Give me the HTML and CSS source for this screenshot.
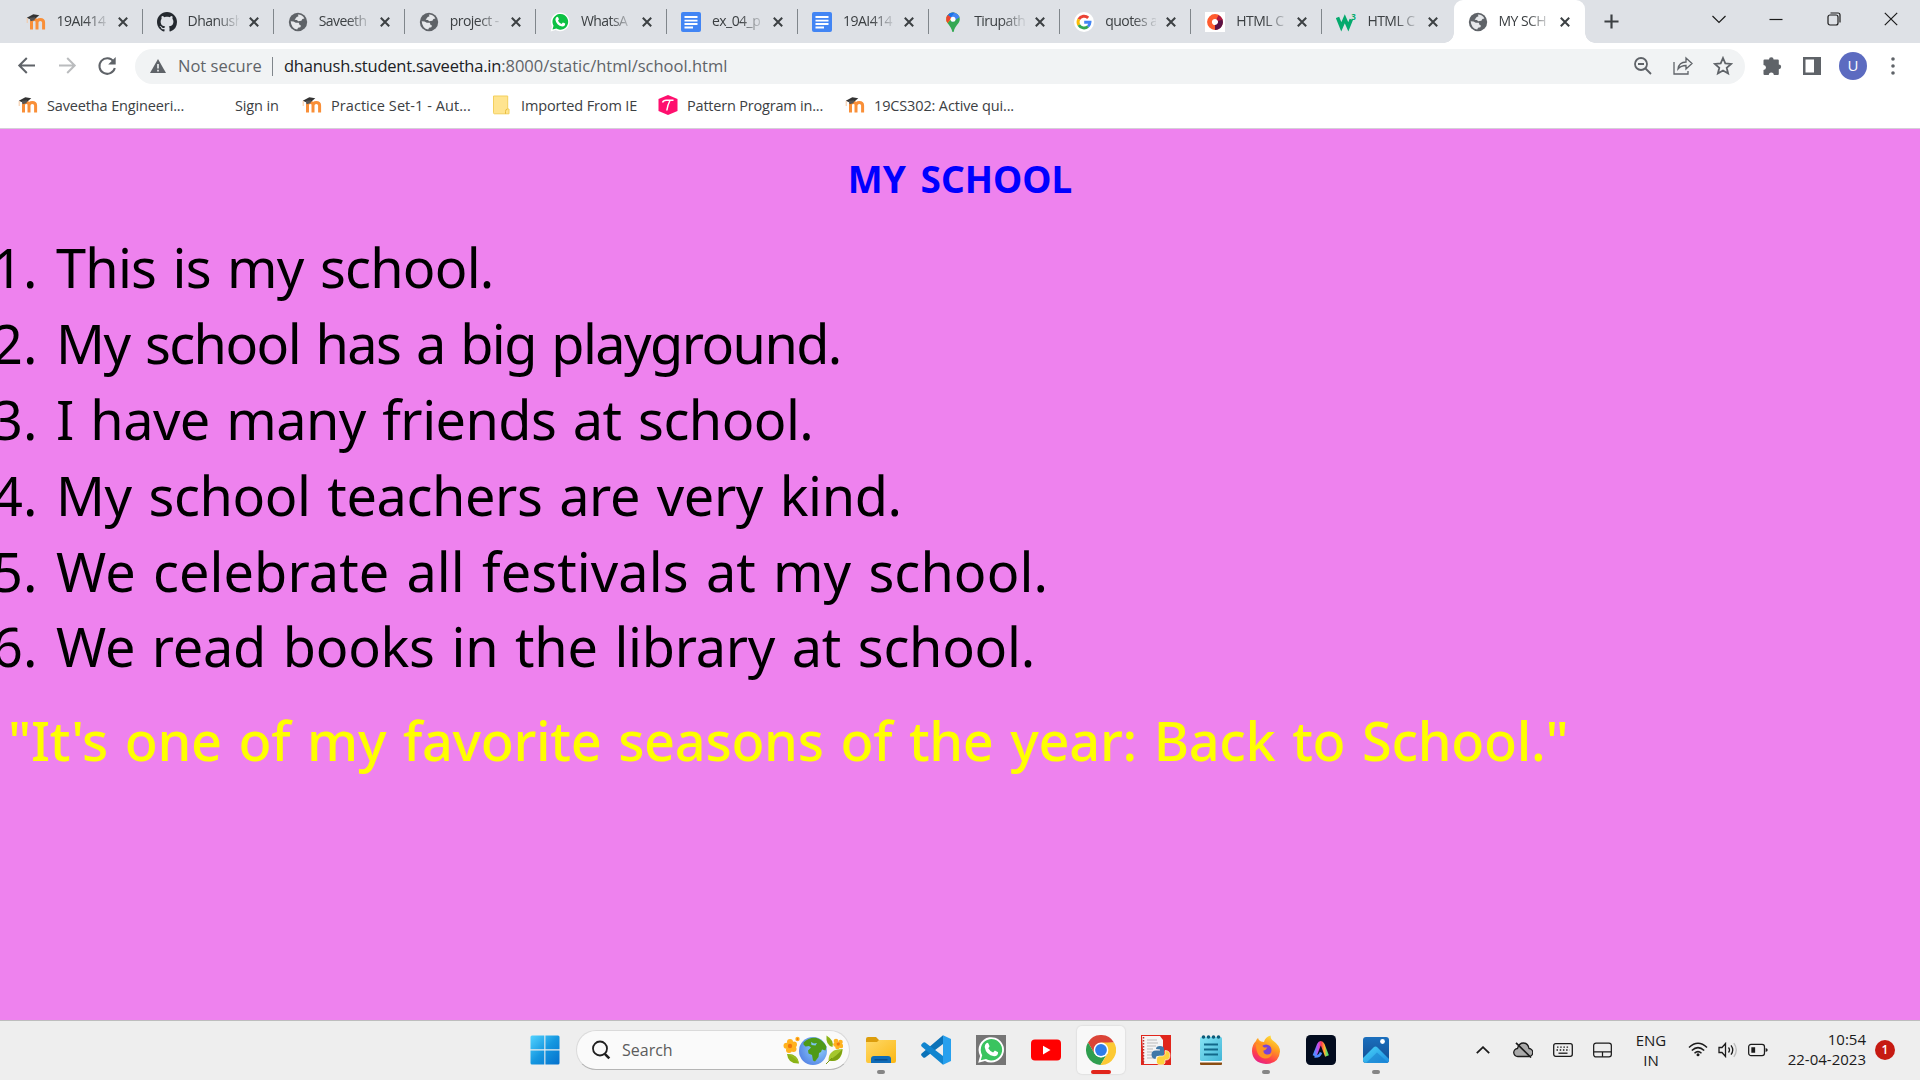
FILE: index.html
```html
<!DOCTYPE html>
<html lang="en">
<head>
<meta charset="utf-8">
<title>MY SCHOOL</title>
<link rel="stylesheet" href="styles.css">
</head>
<body>
<svg class="sprite" aria-hidden="true">
  <defs>
    <linearGradient id="win" x1="0" y1="0" x2="1" y2="1"><stop offset="0" stop-color="#52d3ff"/><stop offset=".5" stop-color="#1597e0"/><stop offset="1" stop-color="#0470cc"/></linearGradient>
    <linearGradient id="fold" x1="0" y1="0" x2="1" y2="1"><stop offset="0" stop-color="#ffd968"/><stop offset="1" stop-color="#fbb713"/></linearGradient>
    <linearGradient id="note" x1="0" y1="0" x2="1" y2="1"><stop offset="0" stop-color="#86e4f5"/><stop offset="1" stop-color="#41b5d6"/></linearGradient>
    <linearGradient id="photo" x1="0" y1="0" x2="0" y2="1"><stop offset="0" stop-color="#1b6fbd"/><stop offset="1" stop-color="#124e92"/></linearGradient>
    <linearGradient id="hill" x1="0" y1="0" x2="1" y2="1"><stop offset="0" stop-color="#4ad4f8"/><stop offset="1" stop-color="#1c8de0"/></linearGradient>
    <linearGradient id="fox" x1=".8" y1="0" x2=".3" y2="1"><stop offset="0" stop-color="#ffe93d"/><stop offset=".4" stop-color="#ff9a1f"/><stop offset=".75" stop-color="#ff3f4b"/><stop offset="1" stop-color="#e5208a"/></linearGradient>
    <linearGradient id="arc" x1="0" y1="1" x2="1" y2="1"><stop offset="0" stop-color="#4f8cff"/><stop offset=".3" stop-color="#c44df0"/><stop offset=".55" stop-color="#ff3b4e"/><stop offset=".8" stop-color="#ffb02e"/><stop offset="1" stop-color="#5be06a"/></linearGradient>
    <radialGradient id="sea" cx=".65" cy=".4" r=".7"><stop offset="0" stop-color="#92d4fb"/><stop offset="1" stop-color="#5583e6"/></radialGradient>
  </defs>
  <symbol id="x" viewBox="0 0 10 10"><path d="M.8.8 9.2 9.2M9.2.8.8 9.2" fill="none" stroke="#3c4043" stroke-width="2"/></symbol>
  <symbol id="globe" viewBox="0 0 20 20"><circle cx="10" cy="10" r="9.200" fill="#5f6368"/><path d="M2.700 9.200 5.500 9.500l2.300 1.300h3l.8 2.200 1.400.6-.6 1.700-2.300.5-.9 1.800Q3.200 16.400 2.700 9.200ZM9.800 2.600q4.700.2 6.600 4l-2 .3-1 1.800-3.200.5-1.300-1.200-2.300-.3L8.700 5l1.800-.8Z" fill="#e6e8eb"/><path d="m13 10.500 4.200-1.200q0 3-1.500 4.700l-1.500-1.700Z" fill="#5f6368"/></symbol>
  <symbol id="moodle" viewBox="0 0 20 20"><path d="M5.500 17.500V10q0-2.600 2.800-2.600T11 10v7.500M11 10.500q0-3.100 3.300-3.100t3.300 3.100v7" fill="none" stroke="#f98f38" stroke-width="3"/><path d="m.8 5.800 6.500-3.500 6 1-4.200 3.500-5 .5Z" fill="#333"/><path d="m3.600 5.800 5.600-.6-.7 3-4 1Z" fill="#555"/><path d="M1.200 6v5" stroke="#f5c7a0" stroke-width="1"/></symbol>
  <symbol id="docs" viewBox="0 0 20 20"><rect width="20" height="20" rx="2" fill="#4285f4"/><path d="M3.500 5h13M3.500 8.600h13M3.500 12h13M3.500 15.500h8.500" stroke="#fff" stroke-width="1.900"/></symbol>
  <symbol id="wa" viewBox="0 0 30 30"><path d="m2.200 27.800 1.900-6.900A12.700 12.700 0 1 1 9 25.900Z" fill="#fff"/><path d="m4.800 25.200 1.400-5A10.700 10.700 0 1 1 10 24Z" fill="var(--g,#3ac45f)"/><path d="M10.400 8.200q1-1 2 .3l1.200 2.700-1.300 2q1.700 3.100 4.800 4.400l1.800-2 3.200 1.600q0 4-4 4Q10 20 8.700 12q0-2.500 1.700-3.800Z" fill="#fff"/></symbol>
</svg>

<header class="tabs">
  <div class="tab"><svg class="fav"><use href="#moodle"/></svg><span class="name">19AI414</span><svg class="close"><use href="#x"/></svg></div>
  <div class="tab"><svg class="fav" viewBox="0 0 16 16"><path fill="#24292f" d="M8 0C3.580 0 0 3.580 0 8c0 3.540 2.290 6.530 5.470 7.590.4.07.55-.17.55-.38 0-.19-.01-.82-.01-1.490-2.010.37-2.530-.49-2.690-.94-.09-.23-.48-.94-.82-1.130-.28-.15-.68-.52-.01-.53.63-.01 1.080.58 1.230.82.72 1.210 1.870.87 2.330.66.07-.52.28-.87.51-1.070-1.780-.2-3.640-.89-3.640-3.950 0-.87.31-1.590.82-2.150-.08-.2-.36-1.020.08-2.120 0 0 .67-.21 2.200.82.640-.18 1.320-.27 2-.27s1.360.09 2 .27c1.530-1.040 2.200-.82 2.200-.82.440 1.100.160 1.920.080 2.120.510.560.820 1.270.820 2.150 0 3.070-1.870 3.750-3.650 3.950.290.250.540.730.540 1.480 0 1.070-.01 1.930-.01 2.200 0 .21.150.46.550.38A8.010 8.010 0 0 0 16 8c0-4.420-3.580-8-8-8Z"/></svg><span class="name">Dhanush</span><svg class="close"><use href="#x"/></svg></div>
  <div class="tab"><svg class="fav"><use href="#globe"/></svg><span class="name">Saveeth</span><svg class="close"><use href="#x"/></svg></div>
  <div class="tab"><svg class="fav"><use href="#globe"/></svg><span class="name">project -</span><svg class="close"><use href="#x"/></svg></div>
  <div class="tab"><svg class="fav green"><use href="#wa"/></svg><span class="name">WhatsA</span><svg class="close"><use href="#x"/></svg></div>
  <div class="tab"><svg class="fav"><use href="#docs"/></svg><span class="name">ex_04_p</span><svg class="close"><use href="#x"/></svg></div>
  <div class="tab"><svg class="fav"><use href="#docs"/></svg><span class="name">19AI414</span><svg class="close"><use href="#x"/></svg></div>
  <div class="tab"><svg class="fav" viewBox="0 0 20 20"><defs><clipPath id="pin"><path d="M10 .5a6.800 6.800 0 0 1 6.800 6.800c0 4.500-5 6.200-6 12.200q-.8 1-1.600 0c-1-6-6-7.700-6-12.200A6.800 6.800 0 0 1 10 .5Z"/></clipPath></defs><g clip-path="url(#pin)"><path fill="#34a853" d="M0 0h20v20H0z"/><path fill="#fbbc04" d="M0 16 15 0H0z"/><path fill="#4285f4" d="M5 0h15v3L9 10Z"/><path fill="#1a73e8" d="M2 0h10L8 5 4 4Z"/><path fill="#ea4335" d="m4.500 2.500 4 3.500-4 5-2-1V4Z"/></g><circle cx="10" cy="7.300" r="2.500" fill="#fff"/></svg><span class="name">Tirupath</span><svg class="close"><use href="#x"/></svg></div>
  <div class="tab"><svg class="fav" viewBox="0 0 20 20"><circle cx="10" cy="10" r="10" fill="#fff"/><g fill="none" stroke-width="2.900"><path stroke="#ea4335" d="M4.800 7.200A6 6 0 0 1 14.200 5.900"/><path stroke="#fbbc05" d="M4.800 7.200a6 6 0 0 0 0 5.800"/><path stroke="#34a853" d="M4.800 13a6 6 0 0 0 9.200 1.500"/><path stroke="#4285f4" d="M14 14.500a6 6 0 0 0 2-4.200H10.200"/></g></svg><span class="name">quotes a</span><svg class="close"><use href="#x"/></svg></div>
  <div class="tab"><svg class="fav" viewBox="0 0 20 20"><path fill="#fff" d="M0 0h20v20H0z"/><g fill="none" stroke-width="4.800"><circle cx="10" cy="10" r="5.500" stroke="#ff5b2e"/><path stroke="#5a1247" d="M14.900 7.500A5.500 5.500 0 0 1 10 15.500"/><path stroke="#ad1740" d="M12.500 5.100a5.500 5.500 0 0 1 2.800 3.300"/></g></svg><span class="name">HTML C</span><svg class="close"><use href="#x"/></svg></div>
  <div class="tab"><svg class="fav" viewBox="0 0 20 20"><path fill="none" stroke="#04aa6d" stroke-width="3.600" d="m1.500 5.500 3.800 9.300 3.500-8 3.500 8 3-7.500"/><text x="15.300" y="8.200" class="w3">3</text></svg><span class="name">HTML C</span><svg class="close"><use href="#x"/></svg></div>
  <div class="tab active"><svg class="fav"><use href="#globe"/></svg><span class="name">MY SCH</span><svg class="close"><use href="#x"/></svg></div>
  <svg class="plus" viewBox="0 0 16 16"><path d="M8 .5v15M.5 8h15" stroke="#3c4043" stroke-width="2.300"/></svg>
  <div class="winbtns">
    <svg viewBox="0 0 14 14"><path d="m.5 4 6.500 6.500L13.500 4"/></svg>
    <svg viewBox="0 0 14 14"><path d="M.5 7.500h13"/></svg>
    <svg viewBox="0 0 14 14"><rect x="1" y="3" width="10" height="10" rx="2"/><path d="M3.500 1H11q2 0 2 2v7.500"/></svg>
    <svg viewBox="0 0 14 14"><path d="m.8.8 12.400 12.400M13.200.8.8 13.200"/></svg>
  </div>
</header>

<nav class="toolbar">
  <svg class="nav" viewBox="0 0 20 20"><path d="M18 9.500H3M9.800 2 2.300 9.500l7.500 7.500"/></svg>
  <svg class="nav dim" viewBox="0 0 20 20"><path d="M2 9.500h15M10.200 2l7.500 7.500-7.500 7.500"/></svg>
  <svg class="nav" viewBox="0 0 20 20"><path d="M16.600 5.500A7.800 7.800 0 1 0 17.800 12"/><path class="solid" d="M18.700 1v7.500h-7.500Z"/></svg>
  <div class="omnibox">
    <svg class="warn" viewBox="0 0 16 14"><path d="M8 0 16 14H0Z" fill="#5f6368"/><path d="M8 5v4.500M8 10.700v1.700" stroke="#f1f3f4" stroke-width="1.600"/></svg>
    <span class="insecure">Not secure</span><i class="bar"></i>
    <span class="url"><b>dhanush.student.saveetha.in</b>:8000/static/html/school.html</span>
    <svg class="act" viewBox="0 0 20 20"><circle cx="8" cy="8" r="6"/><path d="m12.500 12.500 5.500 5.500M5 8h6"/></svg>
    <svg class="act thin" viewBox="0 0 20 20"><path d="M1 6v12h14v-3M5 13q1-7 8-7V2l6 5.500-6 5.500V9.500Q8 9.500 5 13Z"/></svg>
    <svg class="act" viewBox="0 0 20 20"><path d="m10 2 2.300 5.400 5.900.5-4.500 3.900 1.400 5.700-5.100-3-5.100 3 1.400-5.700L1.800 7.900l5.900-.5Z"/></svg>
  </div>
  <svg class="ext" viewBox="0 0 20 20"><path fill="#5f6368" d="M7 3.500a2.300 2.300 0 0 1 4.600 0h4.200q1 0 1 1v4a2.300 2.300 0 0 1 0 4.700V18q0 1-1 1h-4a2.500 2.500 0 0 0-5 0H2.500q-1 0-1-1v-4a2.500 2.500 0 0 0 0-5V4.500q0-1 1-1Z"/></svg>
  <svg class="ext" viewBox="0 0 20 20"><path fill="#5f6368" fill-rule="evenodd" d="M1 1h18v18H1Zm2.500 2.500v13H12v-13Z"/></svg>
  <span class="avatar">U</span>
  <svg class="dots" viewBox="0 0 4 18"><path d="M2 2v0M2 9v0M2 16v0"/></svg>
</nav>

<nav class="bookmarks">
  <span class="bm b1"><svg class="fav"><use href="#moodle"/></svg>Saveetha Engineeri...</span>
  <span class="bm b2">Sign in</span>
  <span class="bm b3"><svg class="fav"><use href="#moodle"/></svg>Practice Set-1 - Aut...</span>
  <span class="bm b4"><svg class="fav" viewBox="0 0 20 20"><path d="M2.500 1h14.200v13H18v4.800H3.500q-1 0-1-1Z" fill="#ffe48f" stroke="#f3cf5d" stroke-width="1"/><path d="M16.500 14q-2 0-2 2.500v2.300" fill="none" stroke="#e9bd3b"/></svg>Imported From IE</span>
  <span class="bm b5"><svg class="fav" viewBox="0 0 20 20"><path d="m10 0 9.500 4v12L10 20 .5 16V4Z" fill="#ff0f6e"/><path d="M4.500 7.500Q5.500 5 8.500 5.200h7M12 5.500Q9.500 10 8.800 15.500" fill="none" stroke="#fff" stroke-width="1.500"/></svg>Pattern Program in...</span>
  <span class="bm b6"><svg class="fav"><use href="#moodle"/></svg>19CS302: Active qui...</span>
</nav>

<main class="page">
  <h1>MY SCHOOL</h1>
  <ul class="facts">
    <li><span class="num">1.</span><span class="l1">This is my school.</span></li>
    <li><span class="num">2.</span><span class="l2">My school has a big playground.</span></li>
    <li><span class="num">3.</span><span class="l3">I have many friends at school.</span></li>
    <li><span class="num">4.</span><span class="l4">My school teachers are very kind.</span></li>
    <li><span class="num">5.</span><span class="l5">We celebrate all festivals at my school.</span></li>
    <li><span class="num">6.</span><span class="l6">We read books in the library at school.</span></li>
  </ul>
  <p class="quote">"It's one of my favorite seasons of the year: Back to School."</p>
</main>

<footer class="taskbar">
  <div class="apps">
    <svg class="start" viewBox="0 0 30 30"><path fill="url(#win)" d="M2 .5h12.300v13.800H.5V2Q.5.500 2 .5ZM15.400.5H28q1.500 0 1.500 1.500v12.300H15.400ZM.5 15.400h13.800v14.100H2q-1.500 0-1.500-1.500ZM15.400 15.400h14.100V28q0 1.500-1.500 1.500H15.400Z"/></svg>
    <div class="search">
      <svg class="lens" viewBox="0 0 20 20"><circle cx="9" cy="8.500" r="7"/><path d="m13.800 13.800 4.500 4.500" stroke-width="2.600"/></svg>
      <span>Search</span>
      <svg class="art" viewBox="0 0 60 30">
        <g fill="#ffb21e"><circle cx="7" cy="7" r="3"/><circle cx="11" cy="9.500" r="3"/><circle cx="10.500" cy="14" r="3"/><circle cx="6" cy="15" r="3"/><circle cx="3.500" cy="10.800" r="3"/><circle cx="14.500" cy="4" r="2.200"/><circle cx="53" cy="6" r="2.300"/><circle cx="57.500" cy="7" r="2.300"/><circle cx="58" cy="11" r="2.300"/><circle cx="54.500" cy="12" r="2.300"/><circle cx="52.500" cy="9.500" r="2.300"/></g>
        <circle cx="7" cy="11" r="2.200" fill="#f0770b"/><circle cx="55.300" cy="9" r="1.700" fill="#f0770b"/><circle cx="14.500" cy="4" r=".9" fill="#f0770b"/>
        <path fill="#8ab316" d="M4 19q11-.5 12 9.500Q5 29 4 19Z"/><path fill="#9cbf24" d="M4 19q8 3 12 9.500-2-9-12-9.500Z"/>
        <path fill="#8ab316" d="M43.500.5q8 5 6 11.500-7-2-6-11.500Z"/><path fill="#a5c72e" d="M59.500 14q-14 0-14 11.500Q59 28 59.500 14Z"/><path fill="#7da112" d="M59.500 14Q58 28 45.500 25.500 54 21 59.500 14Z"/><path d="m43 29 6-6" stroke="#78970f"/>
        <circle cx="30" cy="16" r="14" fill="url(#sea)"/><path fill="#4f9a18" d="M20.500 7.500Q26 2 33 2.800q7 2 10.500 9l-1 3.700-3.500-1-1 2.500-2 1-.5 4-3.500 4.500-2-1-1-5.500-3.500-1.500-.5-3 3-3-2-1.500-3.500.5-2-2Z"/><path fill="#7cc4ef" d="m28 7 3 1.500 3-.5-1.500 2.500-4-.5Z"/>
      </svg>
    </div>
    <span class="app folder"><svg viewBox="0 0 30 30"><path fill="#dc9d0c" d="M0 4q0-2 2-2h8l3 3h17v8H0Z"/><path fill="url(#fold)" d="M0 7h11l2-2h17v21q0 2-2 2H2q-2 0-2-2Z"/><path fill="#0f6cb8" d="M5 28v-4q0-3 3-3h14q3 0 3 3v4Z"/><path d="M8.500 24.800h13" stroke="#0a4a86" stroke-width="1.300"/></svg><i></i></span>
    <span class="app"><svg viewBox="0 0 30 30"><path fill="#0b72b8" d="M.6 18.600 22 .2l2 7.300L4.200 22.500Q3 23.200 2 22.200L.6 20.800q-1-1.100 0-2.200Z"/><path fill="#1185cf" d="M.6 11.400 22 29.800l2-7.300L4.200 7.500Q3 6.800 2 7.800L.6 9.200q-1 1.100 0 2.200Z"/><path fill="#27a0ee" d="M22 .2 30 4v22l-8 3.800Z"/></svg></span>
    <span class="app"><svg viewBox="0 0 30 30"><path fill="#757575" d="M0 0h30v30H0z"/><use href="#wa"/></svg></span>
    <span class="app"><svg viewBox="0 0 30 30"><rect y="4.500" width="30" height="21" rx="4" fill="#f00"/><path d="m12 10.800 7.500 4.300-7.500 4.300Z" fill="#fff"/></svg></span>
    <span class="app open"><svg viewBox="0 0 30 30"><path fill="#db4437" d="M2 7.500A15 15 0 0 1 28 7.500L15 8.500 8.500 18.500Z"/><path fill="#2f9e4f" d="M2 7.500 8.800 19 15 22.500l6.200-3.700L14.500 30A15 15 0 0 1 2 7.500Z"/><path fill="#fcc934" d="M28 7.500A15 15 0 0 1 14.500 30l7-11.500-.5-7.500-6-3.500Z"/><circle cx="15" cy="15" r="7.400" fill="#fff"/><circle cx="15" cy="15" r="5.900" fill="#2f7de9"/></svg><i></i></span>
    <span class="app"><svg viewBox="0 0 30 30"><path fill="#e1251b" d="M0 0h30v30H0z"/><path fill="#f4f4f4" d="M1 1h18l3 4v24H3Z"/><path d="M2.500 2v27" stroke="#b33" stroke-width="1.500" stroke-dasharray="1.500 1.500"/><path d="M6 5h10M6 8h11M6 11h9M6 14h6M6 17h5M6 20h5M6 23h8" stroke="#bbb"/><path fill="#3f78a8" d="M15 14q0-3 4-3t4 3v5q0 2-3 2h-4q-1 0-1.500 3-4-.5-4-4.500t4.500-4H19v-1Z"/><path fill="#fdd23c" stroke="#fff" stroke-width=".6" d="M24 15.500q5 0 5 5t-5 4.500v3q-1 2-4 2t-4.500-2v-4q0-3 3-3h3q2 0 2.500-2Z"/></svg></span>
    <span class="app"><svg viewBox="0 0 30 30"><rect x="4" y="25" width="22" height="5" rx="1" fill="#8a4d12"/><path fill="#fff" d="M4 24h22v3.500H4z"/><rect x="4" y="2" width="22" height="24" rx="1.500" fill="url(#note)"/><path d="M8 9.500h14M8 14.500h14M8 19.500h14" stroke="#12688a" stroke-width="1.900"/><path d="M7.500 2v0M12.500 2v0M17.500 2v0M22.500 2v0" stroke="#0d5b79" stroke-width="3.600" stroke-linecap="round"/></svg></span>
    <span class="app"><svg viewBox="0 0 30 30"><path fill="url(#fox)" d="M5 6q.5-2 2-3 .5 2.500 3 3.500l3 .5q1-5 6.500-6.500 0 3.500 3 5.500Q29 10.500 29 16.500q-1 12-14 12.500Q1.500 28 1 16 1 9.500 5 6Z"/><circle cx="15" cy="15" r="5.500" fill="#7a42d8"/><path fill="#ff9322" d="M5 9q5 0 8 3.500h3.500Q15 15 12.500 15.500q-.5 3 3 4 4 .5 6-2.500-1 7-8 6.500Q5 22 5 9Z"/></svg><i></i></span>
    <span class="app"><svg viewBox="0 0 30 30"><rect width="30" height="30" rx="4.500" fill="#020b1e"/><path d="M8.500 21 12.800 10q2-3.800 4 0L21 21" fill="none" stroke="url(#arc)" stroke-width="4"/><path d="M8.500 21.500q5 .5 6.500-4" fill="none" stroke="#4f8cff" stroke-width="2.500"/></svg></span>
    <span class="app"><svg viewBox="0 0 30 30"><rect x="2" y="2" width="26" height="26" rx="3" fill="url(#photo)"/><path fill="url(#hill)" d="M2 23 12.500 12.500q2-2 4 0L28 24v1q0 3-3 3H5q-3 0-3-3Z"/><path fill="#1577c8" d="m5 28 11-10.500 11 10Z" opacity=".5"/><circle cx="21.500" cy="6.500" r="2.400" fill="#fff"/></svg><i></i></span>
  </div>
  <div class="tray">
    <svg class="t-up" viewBox="0 0 14 8"><path d="m.8 7.200 6.200-6 6.200 6" stroke-width="1.800"/></svg>
    <svg class="t-cloud" viewBox="0 0 20 16"><path d="M5 14.500a4 4 0 0 1-.5-8Q6 1 10.500 1t5.500 5.500a4 4 0 0 1-.5 8Z" fill="#aaa"/><path d="M3 .8 18 15.500" stroke-width="1.700"/></svg>
    <svg class="t-key" viewBox="0 0 20 14"><rect x=".7" y=".7" width="18.600" height="12.600" rx="2"/><path d="M4 4.200h12M3.500 7h13" stroke-dasharray="1.500 1.700"/><path d="M5.500 10.200h9"/></svg>
    <svg class="t-pad" viewBox="0 0 20 16"><rect x=".7" y=".7" width="18.600" height="14.600" rx="2.500"/><path d="M1 10h18M10 10v5"/></svg>
    <div class="lang"><span>ENG</span><span>IN</span></div>
    <svg class="t-wifi" viewBox="0 0 20 15"><path d="M1 5.500q9-8.500 18 0M3.800 8.500q6.200-5.800 12.400 0M6.500 11.200q3.500-3.200 7 0" stroke-width="1.500"/><circle cx="10" cy="12.800" r="1.500" fill="#1b1b1b" stroke="none"/></svg>
    <svg class="t-vol" viewBox="0 0 20 16"><path d="M1 5.500h3l3.500-4v13l-3.500-4H1ZM10.500 5.500q2 2.500 0 5M13 3.300q3.500 4.700 0 9.400"/><path d="M15.800 1.200q5 6.800 0 13.600" stroke="#bbb"/></svg>
    <svg class="t-bat" viewBox="0 0 21 14"><rect x=".7" y="1.200" width="16.600" height="11.600" rx="2.500"/><path d="M3.500 4h4v6h-4zM18.500 5v4l2-1V6Z" fill="#1b1b1b" stroke="none"/></svg>
    <div class="clock"><span>10:54</span><span>22-04-2023</span></div>
    <span class="badge">1</span>
  </div>
</footer>
</body>
</html>
```
FILE: styles.css
```css
* { box-sizing: border-box; }
body {
  margin: 0;
  width: 1920px;
  height: 1080px;
  overflow: hidden;
  display: flex;
  flex-direction: column;
  background: #fff;
  font-family: "Open Sans", "Noto Sans", sans-serif;
  color: #3c4043;
}
svg { display: block; flex: none; }
.sprite { position: absolute; width: 0; height: 0; }
.fav { width: 20px; height: 20px; }
.green { --g: #0cc143; width: 22px; height: 22px; margin: 0 -1px; }

/* Tab strip */
.tabs { display: flex; height: 43px; padding-left: 11.500px; background: #dee1e6; }
.tab {
  position: relative;
  width: 131.1px;
  display: flex;
  align-items: center;
  padding: 0 14px;
  flex: none;
}
.tab::after { content: ""; position: absolute; right: 0; top: 9px; width: 1px; height: 25px; background: #80868b; }
.name {
  width: 51px;
  margin: 0 10px 0 11px;
  white-space: nowrap;
  font-size: 14px;
  letter-spacing: -.55px;
  line-height: 38px;
  padding-bottom: 2px;
  -webkit-mask-image: linear-gradient(90deg, #000 55%, transparent 105%);
  mask-image: linear-gradient(90deg, #000 55%, transparent 105%);
}
.close { width: 10px; height: 10px; }
.active { background: #fff; border-radius: 9px 9px 0 0; z-index: 1; }
.active::before, .active::after {
  content: "";
  display: block;
  position: absolute;
  top: auto;
  bottom: 0;
  width: 10px;
  height: 10px;
}
.active::before { left: -10px; background: radial-gradient(circle at 0 0, #dee1e6 9.500px, #fff 10px); }
.active::after { right: -10px; background: radial-gradient(circle at 100% 0, #dee1e6 9.500px, #fff 10px); }
.tab:nth-child(11)::after { display: none; }
.w3 { font: 700 8px "Open Sans", sans-serif; fill: #04aa6d; }
.plus { width: 15px; height: 15px; margin: 13.500px 0 0 19px; }
.winbtns { display: flex; gap: 43.500px; margin: 12px 22px 0 auto; }
.winbtns svg { width: 14px; height: 14px; fill: none; stroke: #1b1b1b; stroke-width: 1.200; }

/* Toolbar */
.toolbar { display: flex; align-items: center; height: 45px; padding: 1px 22px 0 17px; }
.nav { width: 20px; height: 20px; margin-right: 20px; fill: none; stroke: #5f6368; stroke-width: 2; }
.dim { stroke: #babcbe; }
.solid { fill: #5f6368; stroke: none; }
.omnibox {
  flex: none;
  display: flex;
  align-items: center;
  width: 1610px;
  height: 35px;
  margin-left: -2px;
  padding: 0 12px 0 15px;
  border-radius: 18px;
  background: #f1f3f4;
  color: #5f6368;
  font-size: 16.500px;
}
.warn { width: 16px; height: 14px; }
.insecure { margin-left: 12px; width: 94px; padding-bottom: 2px; }
.bar { width: 1px; height: 19px; background: #80868b; margin-right: 11px; }
.url { margin-right: auto; padding-bottom: 2px; }
.url b { font-weight: 400; color: #202124; letter-spacing: -.22px; }
.act { width: 20px; height: 20px; margin-left: 20px; fill: none; stroke: #5f6368; stroke-width: 1.800; }
.thin { stroke-width: 1.300; }
.ext { width: 20px; height: 20px; margin-left: 20px; }
.omnibox + .ext { margin-left: 17px; }
.avatar {
  width: 28px;
  height: 28px;
  margin: 0 24px 0 17px;
  border-radius: 50%;
  background: #5c6bc0;
  color: #fff;
  font-size: 15px;
  line-height: 27px;
  text-align: center;
}
.dots { width: 4px; height: 18px; }
.dots path { stroke: #5f6368; stroke-width: 3.600; stroke-linecap: round; }

/* Bookmarks bar */
.bookmarks {
  display: flex;
  align-items: center;
  height: 41px;
  padding: 0 0 6px 18px;
  border-bottom: 1px solid #d5cfd8;
  font-size: 14.500px;
  letter-spacing: -.14px;
  white-space: nowrap;
}
.bm { display: flex; align-items: center; gap: 9px; flex: none; }
.b1 { width: 217px; }
.b2 { width: 67px; }
.b3 { width: 189px; letter-spacing: .06px; }
.b4 { width: 167px; }
.b5 { width: 187px; letter-spacing: -.2px; }
.b4 .fav { margin-right: 1px; }

/* Web page */
.page {
  height: 891px;
  overflow: hidden;
  background: #ee82ee;
  font-family: "Comic Sans MS", "Noto Sans", sans-serif;
}
h1 { margin: 0; padding-top: 23px; font-size: 37px; line-height: 54px; word-spacing: 5px; text-align: center; color: #00f; }
.facts { margin: 23px 0 0; padding: 0; list-style: none; color: #000; font-size: 54px; word-spacing: 3px; }
.facts li { display: flex; height: 75.900px; line-height: 76px; white-space: nowrap; }
.num { flex: none; width: 45px; margin: 0 19px 0 -8px; }
.l1 { letter-spacing: -.75px; }
.l2 { letter-spacing: -1.550px; }
.l3 { letter-spacing: -.53px; }
.l4 { letter-spacing: -.37px; }
.l5 { letter-spacing: .1px; }
.l6 { letter-spacing: -.26px; }
.quote {
  margin: 18px 0 0 8px;
  color: #ff0;
  font-size: 54px;
  font-weight: 500;
  line-height: 76px;
  letter-spacing: -.28px;
  word-spacing: 3px;
  white-space: nowrap;
}

/* Taskbar */
.taskbar { position: relative; flex: 1; display: flex; justify-content: space-between; background: #eee; border-top: 1px solid #bdbdbd; color: #1b1b1b; }
.apps { display: flex; align-items: center; padding: 0 0 1px 529.500px; }
.start { width: 30px; height: 30px; }
.search {
  display: flex;
  align-items: center;
  width: 274px;
  height: 40px;
  margin: 0 7px 0 16.500px;
  padding: 0 6px 0 14px;
  border: 1px solid #dadada;
  border-bottom-color: #b5b5b5;
  border-radius: 20px;
  background: #fafafa;
  color: #5c5c5c;
  font-size: 16px;
}
.search span { margin: 0 auto 0 11px; }
.lens { width: 20px; height: 20px; fill: none; stroke: #1f1f1f; stroke-width: 1.800; }
.art { width: 60px; height: 30px; }
.app { position: relative; width: 48px; height: 48px; margin-right: 7px; display: flex; align-items: center; justify-content: center; }
.app svg { width: 30px; height: 30px; }
.app i { position: absolute; left: 20px; bottom: 0; width: 8px; height: 4px; border-radius: 2px; background: #858585; }
.open { background: #f8f8f8; border-radius: 5px; box-shadow: 0 0 1px 1px #e2e2e2; }
.open i { left: 14px; width: 20px; background: #e1251b; }
.tray { display: flex; align-items: center; padding: 0 25px 2px 0; font-size: 15px; line-height: 20px; }
.tray svg { fill: none; stroke: #1b1b1b; stroke-width: 1.300; }
.t-up { width: 14px; height: 8px; margin-right: 23px; }
.t-cloud { width: 20px; height: 16px; margin-right: 20px; }
.t-key { width: 20px; height: 14px; margin-right: 20px; }
.t-pad { width: 19px; height: 16px; margin-right: 20px; }
.lang { width: 38px; margin-right: 18px; text-align: center; }
.lang span, .clock span { display: block; }
.t-wifi { width: 20px; height: 15px; margin-right: 10px; }
.t-vol { width: 20px; height: 16px; margin-right: 10px; }
.t-bat { width: 20px; height: 14px; }
.clock { width: 98px; margin-right: 9px; padding-bottom: 2px; text-align: right; }
.badge { width: 20px; height: 20px; border-radius: 50%; background: #c61a12; color: #fff; font-size: 12px; font-weight: 600; text-align: center; }
```
